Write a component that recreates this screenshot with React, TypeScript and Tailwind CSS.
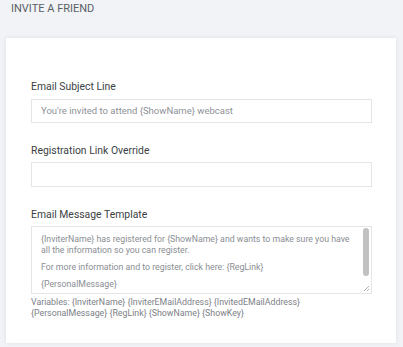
import React from "react";

export default function App() {
  const font = { fontFamily: "Roboto, 'Noto Sans', sans-serif" };
  return (
    <div className="w-[403px] h-[347px] bg-[#f1f3f6] overflow-hidden" style={font}>
      <div className="pl-[11px] pt-[2px] h-[38px] text-[11px] leading-[14px] text-[#5a5f66]">
        INVITE A FRIEND
      </div>
      <div className="mx-[6px] w-[390px] h-[305px] bg-white shadow-[0_0_5px_rgba(0,0,0,0.08)] pt-[42px] pl-[25px] pr-[24px]">
        <div className="text-[10.4px] leading-[14px] text-[#3b3f44] mb-[5px]">Email Subject Line</div>
        <div className="h-[24px] border border-[#e3e5e8] flex items-center pl-[9px] text-[9.5px] text-[#8e9297]">
          You're invited to attend {"{ShowName}"} webcast
        </div>
        <div className="text-[10.4px] leading-[14px] text-[#3b3f44] mt-[21px] mb-[4px]">Registration Link Override</div>
        <div className="h-[25px] border border-[#e3e5e8]"></div>
        <div className="text-[10.4px] leading-[14px] text-[#3b3f44] mt-[21px] mb-[4px]">Email Message Template</div>
        <div className="relative h-[68px] border border-[#e3e5e8] pl-[9px] pr-[12px] pt-[7px] text-[8.75px] leading-[11px] text-[#8a8e93] overflow-hidden">
          <div>{"{InviterName}"} has registered for {"{ShowName}"} and wants to make sure you have all the information so you can register.</div>
          <div className="mt-[6px]">For more information and to register, click here: {"{RegLink}"}</div>
          <div className="mt-[6px]">{"{PersonalMessage}"}</div>
          <div className="absolute right-[2px] top-[1px] w-[6px] h-[48px] rounded-[3px] bg-[#c1c1c1]"></div>
          <svg className="absolute right-[1px] bottom-[1px]" width="7" height="7" viewBox="0 0 7 7">
            <line x1="6" y1="1" x2="1" y2="6" stroke="#a0a0a0" strokeWidth="0.8" />
            <line x1="6" y1="4" x2="4" y2="6" stroke="#a0a0a0" strokeWidth="0.8" />
          </svg>
        </div>
        <div className="mt-[3px] text-[8.8px] leading-[10.5px] text-[#7d8187]">
          Variables: {"{InviterName}"} {"{InviterEMailAddress}"} {"{InvitedEMailAddress}"}
          <br />
          {"{PersonalMessage}"} {"{RegLink}"} {"{ShowName}"} {"{ShowKey}"}
        </div>
      </div>
    </div>
  );
}
